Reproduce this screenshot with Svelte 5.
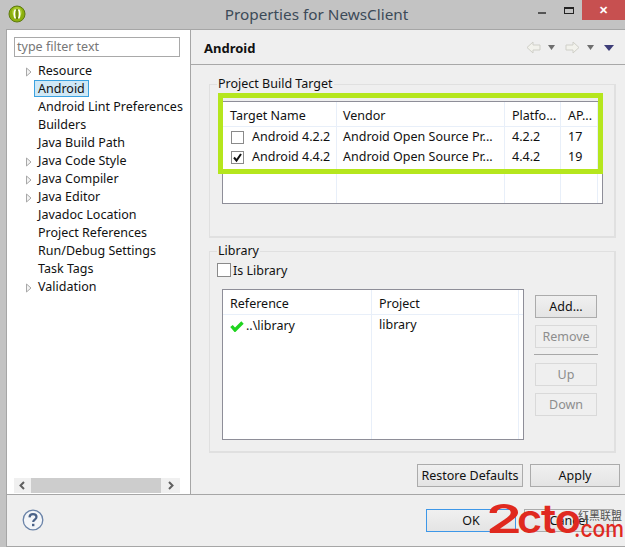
<script>
  const tree = [
    { t: 'Resource', a: true },
    { t: 'Android', sel: true },
    { t: 'Android Lint Preferences' },
    { t: 'Builders' },
    { t: 'Java Build Path' },
    { t: 'Java Code Style', a: true },
    { t: 'Java Compiler', a: true },
    { t: 'Java Editor', a: true },
    { t: 'Javadoc Location' },
    { t: 'Project References' },
    { t: 'Run/Debug Settings' },
    { t: 'Task Tags' },
    { t: 'Validation', a: true }
  ];
  const targets = [
    { n: 'Android 4.2.2', v: 'Android Open Source Pr...', p: '4.2.2', a: '17', c: false },
    { n: 'Android 4.4.2', v: 'Android Open Source Pr...', p: '4.4.2', a: '19', c: true }
  ];
</script>

<div class="app">
  <header class="title">
    <svg class="logo" width="18" height="18" viewBox="0 0 18 18">
      <circle cx="9" cy="9" r="8" fill="#8cb00e" stroke="#5e7a10" />
      <circle cx="9" cy="7" r="5" fill="#b4d43a" opacity=".7" />
      <path d="M7.500 4.500C5.800 6 5.800 12 7.500 13.500M10.500 4.500C12.200 6 12.200 12 10.500 13.500" fill="none" stroke="#fff" stroke-width="1.600" />
      <path d="M9 4v10" stroke="#3d5208" stroke-width="1" />
    </svg>
    <span class="title-text">Properties for NewsClient</span>
    <div class="win-btns">
      <span class="w-min"></span>
      <span class="w-max"></span>
      <span class="w-close">✕</span>
    </div>
  </header>

  <div class="window">
    <div class="main">
      <aside class="side">
        <div class="filter">type filter text</div>
        <ul class="tree">
          {#each tree as item}
            <li class="node">
              <span class="arrow-slot">
                {#if item.a}
                  <svg width="7" height="10" viewBox="0 0 7 10"><path d="M1.500 1v8L6 5z" fill="#f4f4f4" stroke="#a8a8a8" /></svg>
                {/if}
              </span>
              <span class="label" class:sel={item.sel}>{item.t}</span>
            </li>
          {/each}
        </ul>
        <div class="hscroll">
          <svg width="17" height="15" viewBox="0 0 17 15"><path d="M10 4L6.500 7.500 10 11" fill="none" stroke="#606060" stroke-width="2" /></svg>
          <div class="thumb"></div>
          <svg width="19" height="15" viewBox="0 0 19 15"><path d="M8 4l3.500 3.500L8 11" fill="none" stroke="#606060" stroke-width="2" /></svg>
        </div>
      </aside>

      <section class="content">
        <div class="page-head">
          <b>Android</b>
          <div class="nav">
            <svg class="back" width="15" height="13" viewBox="0 0 15 13"><path d="M7 1L1 6.500 7 12V9h7V4H7z" fill="#f2f2ec" stroke="#cfcfc8" /></svg>
            <svg class="drop" width="9" height="5" viewBox="0 0 9 5"><path d="M1 0h7L4.500 5z" fill="#6e6e6e" /></svg>
            <svg class="fwd" width="15" height="13" viewBox="0 0 15 13"><path d="M8 1l6 5.500L8 12V9H1V4h7z" fill="#f2f2ec" stroke="#cfcfc8" /></svg>
            <svg class="drop two" width="9" height="5" viewBox="0 0 9 5"><path d="M1 0h7L4.500 5z" fill="#6e6e6e" /></svg>
            <svg class="menu" width="10" height="6" viewBox="0 0 10 6"><path d="M0 0h10L5 6z" fill="#3d3d78" /></svg>
          </div>
        </div>

        <div class="page-body">
          <fieldset class="group g1">
            <legend>Project Build Target</legend>
            <div class="table t1">
              <div class="row head">
                <span class="c1">Target Name</span><span class="c2">Vendor</span><span class="c3">Platfo...</span><span class="c4">AP...</span>
              </div>
              {#each targets as r}
                <div class="row body">
                  <span class="c1 tc">
                    <span class="check" class:on={r.c}>
                      {#if r.c}
                        <svg width="11" height="11" viewBox="0 0 11 11"><path d="M2 5.500l2.500 3L9 2" fill="none" stroke="#111" stroke-width="2" /></svg>
                      {/if}
                    </span>{r.n}
                  </span>
                  <span class="c2">{r.v}</span><span class="c3">{r.p}</span><span class="c4">{r.a}</span>
                </div>
              {/each}
              <div class="row filler">
                <span class="c1"></span><span class="c2"></span><span class="c3"></span><span class="c4"></span>
              </div>
              <div class="highlight"></div>
            </div>
          </fieldset>

          <fieldset class="group g2">
            <legend>Library</legend>
            <label class="is-lib"><span class="check big"></span>Is Library</label>
            <div class="lib-row">
              <div class="table t2">
                <div class="row head">
                  <span class="r1">Reference</span><span class="r2">Project</span>
                </div>
                <div class="row body">
                  <span class="r1 ref">
                    <svg width="14" height="12" viewBox="0 0 14 12"><path d="M1.500 6l3.500 4L12.500 2.500" fill="none" stroke="#1fd41f" stroke-width="3.400" /></svg>..\library
                  </span>
                  <span class="r2">library</span>
                </div>
                <div class="row filler">
                  <span class="r1"></span><span class="r2"></span>
                </div>
              </div>
              <div class="side-btns">
                <button>Add...</button>
                <button class="dis">Remove</button>
                <hr />
                <button class="dis">Up</button>
                <button class="dis">Down</button>
              </div>
            </div>
          </fieldset>

          <div class="actions">
            <button class="restore">Restore Defaults</button>
            <button class="apply">Apply</button>
          </div>
        </div>
      </section>
    </div>

    <footer class="foot">
      <svg class="help" width="22" height="22" viewBox="0 0 22 22">
        <circle cx="11" cy="11" r="9.800" fill="#f3f5f8" stroke="#6a83a8" stroke-width="1.300" />
        <path d="M7.500 8.300C7.700 6 9.400 5.200 11 5.200c2 0 3.500 1.100 3.500 2.900 0 2.600-3.300 2.500-3.300 5" fill="none" stroke="#4a6288" stroke-width="2.200" />
        <rect x="10" y="14.800" width="2.400" height="2.400" fill="#4a6288" />
      </svg>
      <div class="foot-btns">
        <button class="ok">OK</button>
        <button class="cancel">Cancel</button>
      </div>
    </footer>
  </div>

  <div class="mark" aria-hidden="true">
    <span class="mark-two">2</span>
    <span class="mark-main">cto</span>
    <span class="mark-cn">红黑联盟</span>
    <span class="mark-com">.com</span>
  </div>
</div>

<style>
  :global(body) {
    margin: 0;
    background: #c3c3c3;
  }
  .app {
    position: relative;
    width: 625px;
    height: 547px;
    overflow: hidden;
    background: #c3c3c3;
    display: flex;
    flex-direction: column;
    font-family: "Noto Sans", "Open Sans", sans-serif;
    font-size: 12.500px;
    color: #111;
  }
  .title {
    height: 29px;
    flex: none;
    display: flex;
    position: relative;
    justify-content: center;
  }
  .logo {
    position: absolute;
    left: 8px;
    top: 5px;
  }
  .title-text {
    font-size: 15.300px;
    line-height: 29px;
    color: #3c4a58;
    margin-left: 8px;
  }
  .win-btns {
    position: absolute;
    right: 0;
    top: 0;
    height: 20px;
    display: flex;
  }
  .w-min {
    width: 8px;
    height: 2px;
    background: #555;
    margin: 12px 18px 0 0;
  }
  .w-max {
    width: 8px;
    height: 4px;
    border: 1px solid #222;
    border-top-width: 2px;
    margin: 7px 8px 0 0;
  }
  .w-close {
    width: 43px;
    height: 20px;
    background: #c75050;
    color: #fff;
    text-align: center;
    font-size: 11px;
    line-height: 20px;
    font-weight: 700;
  }
  .window {
    flex: 1;
    margin-left: 6px;
    border-left: 1px solid #a6a6a6;
    border-top: 1px solid #a6a6a6;
    border-bottom: 1px solid #a6a6a6;
    background: #efefef;
    display: flex;
    flex-direction: column;
    min-height: 0;
  }
  .main {
    height: 464px;
    flex: none;
    display: flex;
    border-bottom: 1px solid #a6a6a6;
  }
  .side {
    width: 184px;
    flex: none;
    box-sizing: border-box;
    background: #fff;
    border-right: 1px solid #a6a6a6;
    display: flex;
    flex-direction: column;
  }
  .filter {
    margin: 7px 0 0 7px;
    width: 162px;
    height: 18px;
    border: 1px solid #a9a9a9;
    color: #777;
    line-height: 17px;
    padding-left: 2px;
  }
  .tree {
    list-style: none;
    margin: 4px 0 0;
    padding: 0;
    flex: 1;
  }
  .node {
    height: 18px;
    display: flex;
    align-items: center;
    line-height: 18px;
  }
  .arrow-slot {
    width: 31px;
    flex: none;
    padding-left: 18px;
    box-sizing: border-box;
    display: flex;
    align-items: center;
    padding-top: 3px;
  }
  .label {
    padding: 0 3px;
    margin-left: -4px;
    height: 17px;
    line-height: 16px;
    border: 1px solid transparent;
    white-space: nowrap;
    box-sizing: border-box;
  }
  .label.sel {
    background: #cfe8f6;
    border-color: #3ba2e0;
  }
  .hscroll {
    margin: 0 0 1px 7px;
    width: 166px;
    height: 15px;
    background: #f0f0f0;
    display: flex;
  }
  .thumb {
    flex: 1;
    background: #cdcdcd;
  }
  .content {
    flex: 1;
    min-width: 0;
    display: flex;
    flex-direction: column;
  }
  .page-head {
    height: 35px;
    flex: none;
    box-sizing: border-box;
    border-bottom: 1px solid #a8a8a8;
    display: flex;
    align-items: center;
    justify-content: space-between;
    padding: 1px 11px 0 13px;
    font-size: 13px;
  }
  .page-head b {
    font-weight: 700;
  }
  .nav {
    display: flex;
    align-items: center;
  }
  .back {
    margin-right: -2px;
  }
  .drop {
    margin-left: 8px;
  }
  .fwd {
    margin-left: 9px;
  }
  .drop.two {
    margin-left: 6px;
  }
  .menu {
    margin-left: 9px;
  }
  .page-body {
    flex: 1;
    padding: 0 0 0 18px;
    display: flex;
    flex-direction: column;
    min-height: 0;
  }
  .group {
    margin: 0;
    padding: 0;
    border: 1px solid #e0e0e0;
    border-width: 1px 2px 2px 1px;
    width: 407px;
    box-sizing: border-box;
    min-inline-size: 0;
  }
  legend {
    padding: 0 1px;
    margin-left: 7px;
    line-height: 18px;
    height: 18px;
  }
  .g1 {
    height: 163px;
    margin-top: 10px;
  }
  .g2 {
    height: 211px;
    margin-top: 4px;
  }
  .table {
    background: #fff;
    border: 1px solid #8e8e98;
    box-sizing: border-box;
    display: flex;
    flex-direction: column;
    position: relative;
  }
  .t1 {
    margin: 8px 0 0 12px;
    width: 381px;
    height: 103px;
  }
  .highlight {
    position: absolute;
    left: -5px;
    top: -9px;
    width: 385px;
    height: 81px;
    box-sizing: border-box;
    border: 5px solid #b5e61d;
    pointer-events: none;
  }
  .row {
    display: flex;
    white-space: nowrap;
  }
  .row > span {
    box-sizing: border-box;
    padding-left: 6px;
    border-right: 1px solid #e8eff9;
    overflow: hidden;
  }
  .row.head {
    height: 24px;
    line-height: 27px;
    border-bottom: 1px solid #e8eff9;
  }
  .t1 .row.body {
    height: 20px;
    line-height: 20px;
  }
  .row.filler {
    flex: 1;
  }
  .c1 {
    width: 114px;
  }
  .c2 {
    width: 168px;
  }
  .c3 {
    width: 56px;
  }
  .c4 {
    width: 37px;
  }
  .row > .c1,
  .row > .c3,
  .row > .c4 {
    padding-left: 7px;
  }
  .row > .tc {
    display: flex;
    align-items: center;
    padding-left: 8px;
  }
  .check {
    width: 11px;
    height: 11px;
    border: 1px solid #8a8a8a;
    background: #fff;
    margin-right: 8px;
    flex: none;
    display: block;
  }
  .check svg {
    display: block;
  }
  .check.big {
    margin-right: 2px;
    width: 12px;
    height: 12px;
  }
  .is-lib {
    display: flex;
    align-items: center;
    margin: 1px 0 0 7px;
    height: 18px;
  }
  .lib-row {
    display: flex;
    margin: 10px 0 0 12px;
    align-items: flex-start;
  }
  .t2 {
    width: 302px;
    height: 151px;
  }
  .t2 .row.head {
    height: 24px;
    line-height: 27px;
  }
  .t2 .row.body {
    height: 21px;
    line-height: 20px;
  }
  .r1 {
    width: 149px;
  }
  .r2 {
    width: 147px;
  }
  .row > .r1,
  .row > .r2 {
    padding-left: 7px;
  }
  .ref {
    display: flex;
    align-items: center;
  }
  .ref svg {
    margin-right: 2px;
  }
  .side-btns {
    margin: 6px 0 0 11px;
    width: 64px;
    display: flex;
    flex-direction: column;
  }
  button {
    font: inherit;
    color: #111;
    padding: 0;
    background: linear-gradient(#f0f0f0, #e4e4e4);
    border: 1px solid #ababab;
    box-sizing: border-box;
    height: 23px;
    line-height: 20px;
  }
  .side-btns button {
    width: 62px;
    margin-bottom: 7px;
  }
  .side-btns .dis {
    background: #efefef;
    border: 1px solid #d9d9d9;
    color: #8d8d8d;
  }
  hr {
    border: 0;
    height: 1px;
    width: 64px;
    background: #a8a8a8;
    margin: -1px 0 8px -1px;
  }
  .actions {
    display: flex;
    margin: 11px 0 0 208px;
    gap: 7px;
  }
  .restore {
    width: 106px;
  }
  .apply {
    width: 90px;
  }
  .foot {
    flex: 1;
    display: flex;
    align-items: flex-start;
  }
  .help {
    margin: 14px 0 0 15px;
  }
  .foot-btns {
    margin: 14px 0 0 382px;
    display: flex;
    gap: 8px;
  }
  .ok {
    width: 90px;
    border-color: #3d97e8;
  }
  .cancel {
    width: 90px;
  }
  .mark {
    position: absolute;
    left: 488px;
    top: 500px;
    width: 137px;
    height: 44px;
    color: #e0291f;
  }
  .mark-two {
    position: absolute;
    left: -2px;
    top: -4px;
    font-family: "Inter", sans-serif;
    font-size: 40px;
    line-height: 46px;
    font-weight: 600;
    transform: scaleX(1.450);
    transform-origin: left top;
  }
  .mark-main {
    position: absolute;
    left: 29px;
    top: -4px;
    font-family: "Inter", sans-serif;
    font-size: 40px;
    line-height: 46px;
    font-weight: 600;
    letter-spacing: -1px;
    transform: scaleX(1.080);
    transform-origin: left top;
  }
  .mark-cn {
    position: absolute;
    left: 90px;
    top: 7px;
    font-family: "Noto Sans CJK SC", sans-serif;
    font-size: 11px;
    line-height: 16px;
    color: #555;
  }
  .mark-com {
    position: absolute;
    left: 86px;
    top: 14px;
    font-family: "Inter", sans-serif;
    font-size: 24px;
    font-weight: 500;
    line-height: 30px;
    transform: scaleX(0.880);
    transform-origin: left top;
  }
</style>
